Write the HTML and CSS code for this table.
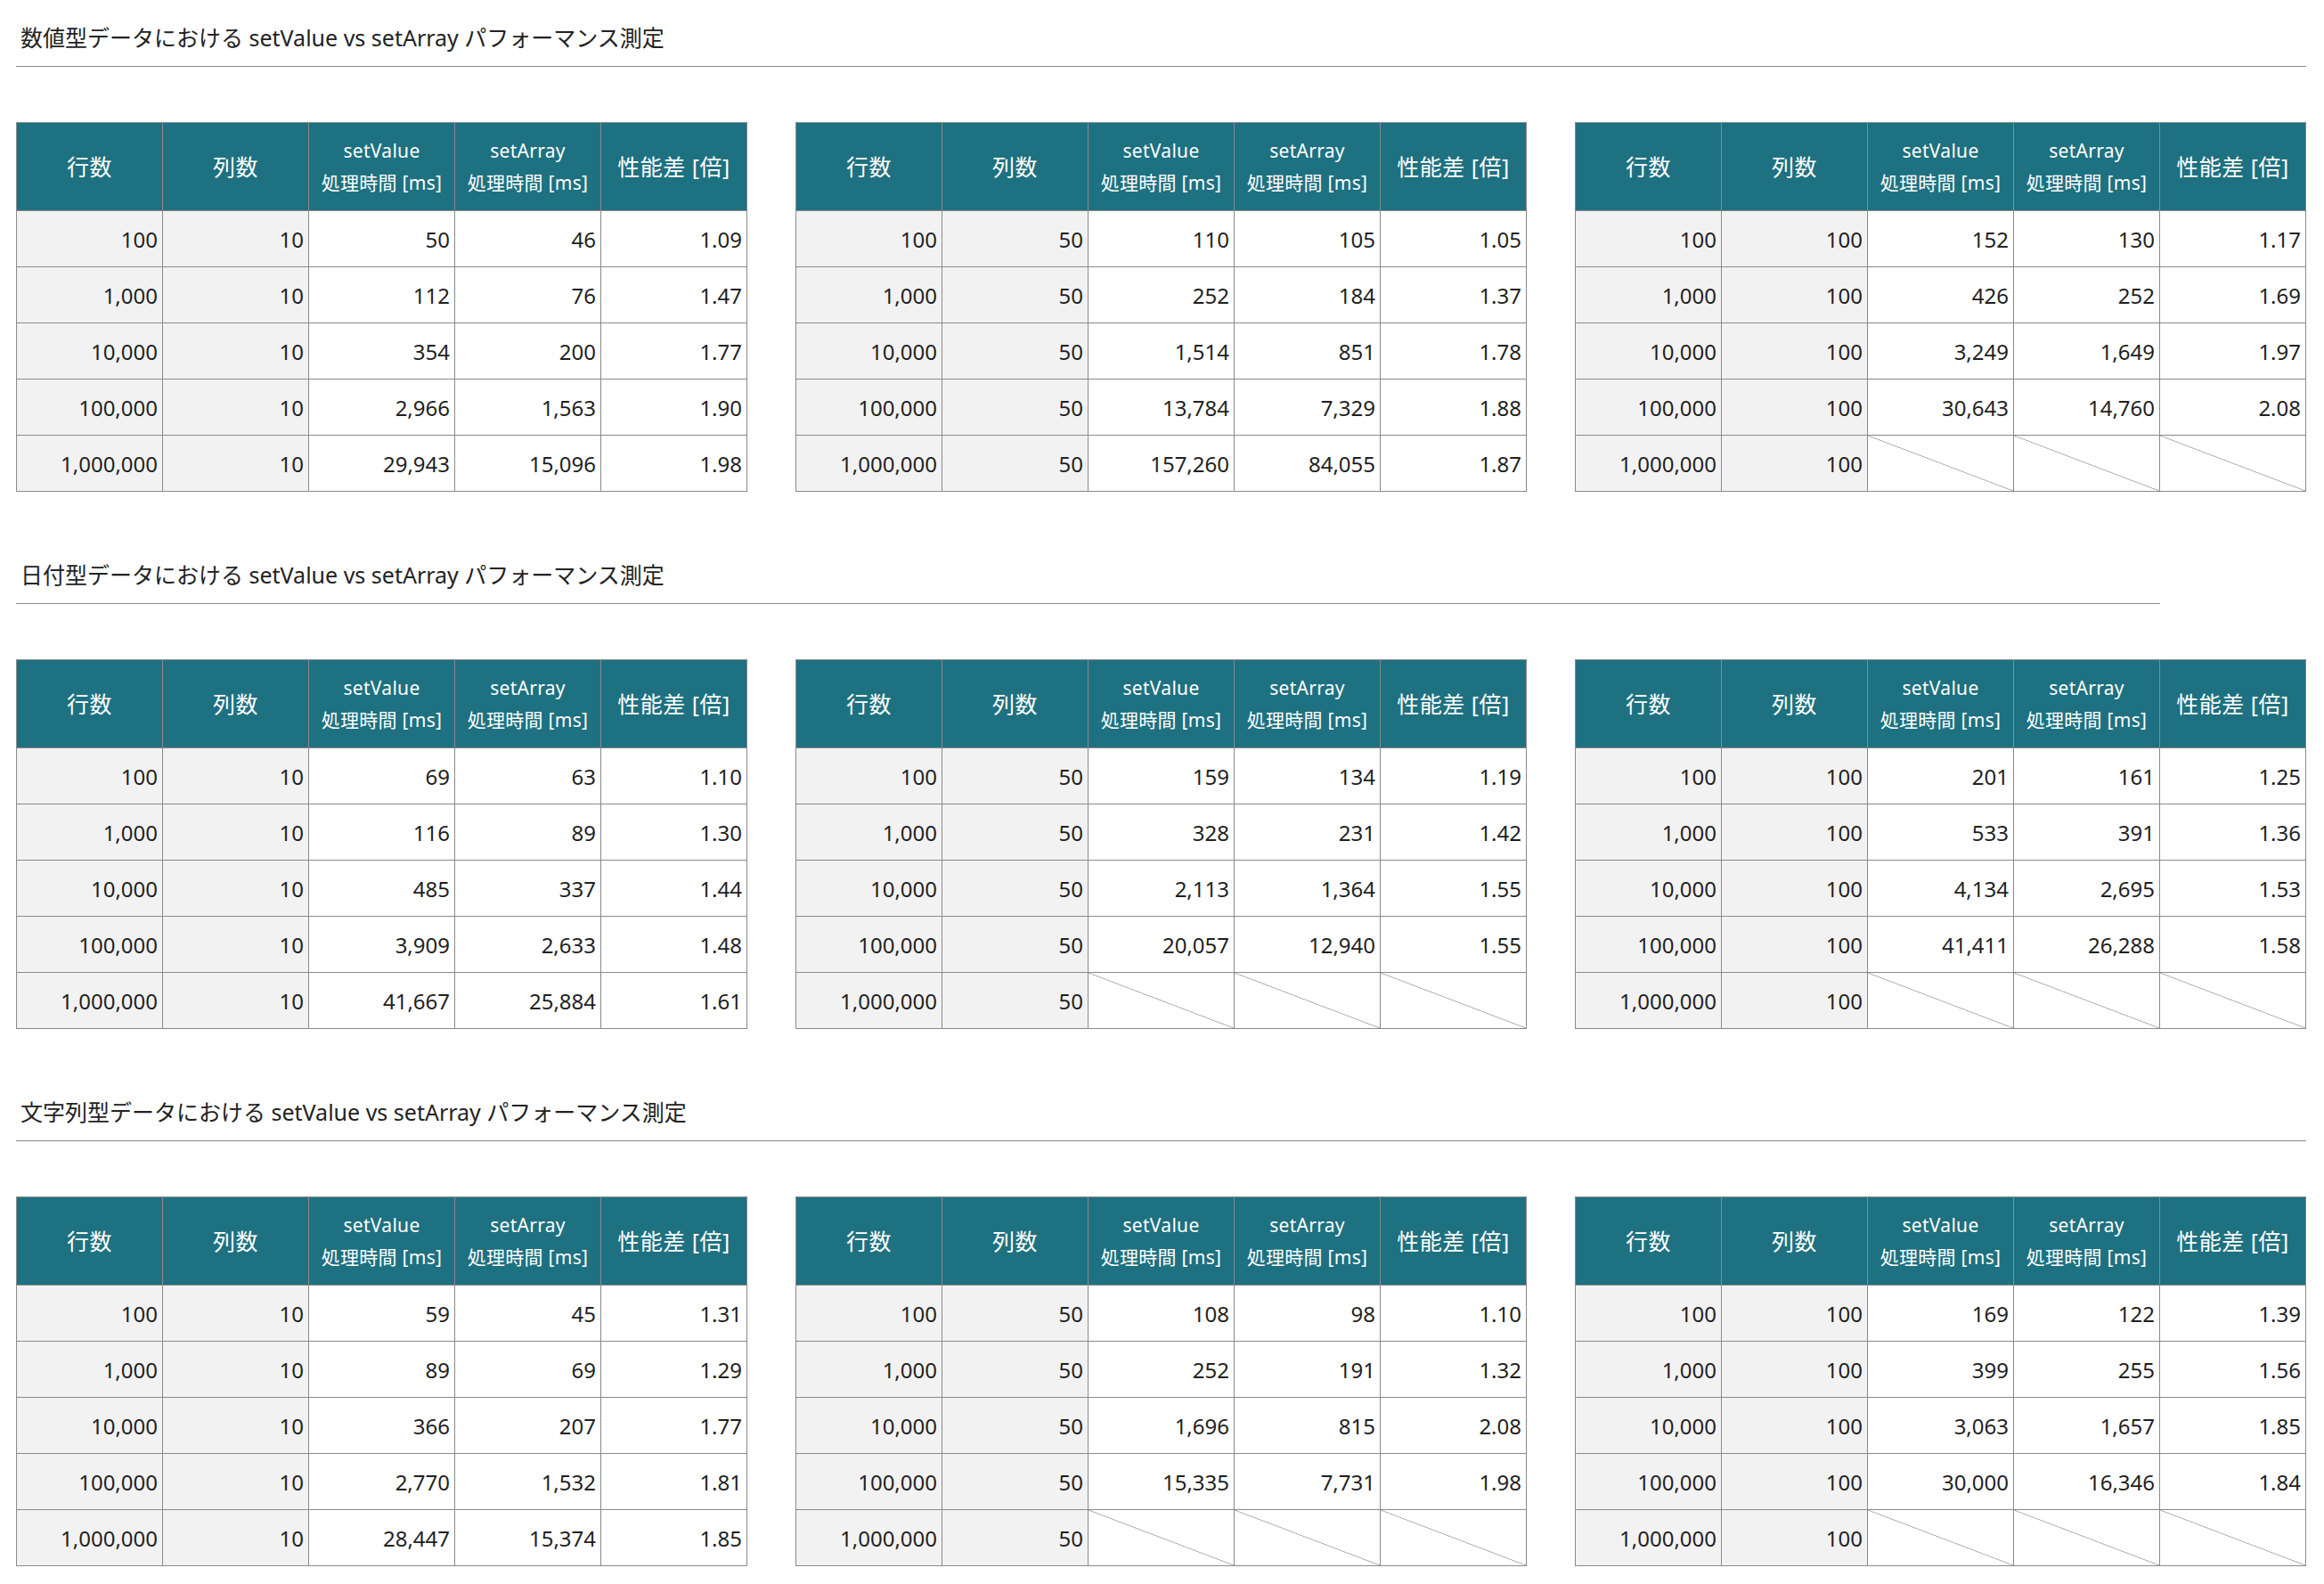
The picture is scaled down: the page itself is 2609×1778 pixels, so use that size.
FILE: index.html
```html
<!DOCTYPE html>
<html lang="ja">
<head>
<meta charset="utf-8">
<title>setValue vs setArray パフォーマンス測定</title>
<link rel="stylesheet" href="styles.css">
</head>
<body>
<div class="page">

<section class="section">
  <h2 class="title">数値型データにおける setValue vs setArray パフォーマンス測定</h2>
  <div class="tables">
    <div class="grid">
      <div class="h">行数</div><div class="h">列数</div><div class="h two">setValue<br>処理時間 [ms]</div><div class="h two">setArray<br>処理時間 [ms]</div><div class="h">性能差 [倍]</div>
      <div class="k">100</div><div class="k">10</div><div class="v">50</div><div class="v">46</div><div class="v">1.09</div>
      <div class="k">1,000</div><div class="k">10</div><div class="v">112</div><div class="v">76</div><div class="v">1.47</div>
      <div class="k">10,000</div><div class="k">10</div><div class="v">354</div><div class="v">200</div><div class="v">1.77</div>
      <div class="k">100,000</div><div class="k">10</div><div class="v">2,966</div><div class="v">1,563</div><div class="v">1.90</div>
      <div class="k">1,000,000</div><div class="k">10</div><div class="v">29,943</div><div class="v">15,096</div><div class="v">1.98</div>
    </div>
    <div class="grid">
      <div class="h">行数</div><div class="h">列数</div><div class="h two">setValue<br>処理時間 [ms]</div><div class="h two">setArray<br>処理時間 [ms]</div><div class="h">性能差 [倍]</div>
      <div class="k">100</div><div class="k">50</div><div class="v">110</div><div class="v">105</div><div class="v">1.05</div>
      <div class="k">1,000</div><div class="k">50</div><div class="v">252</div><div class="v">184</div><div class="v">1.37</div>
      <div class="k">10,000</div><div class="k">50</div><div class="v">1,514</div><div class="v">851</div><div class="v">1.78</div>
      <div class="k">100,000</div><div class="k">50</div><div class="v">13,784</div><div class="v">7,329</div><div class="v">1.88</div>
      <div class="k">1,000,000</div><div class="k">50</div><div class="v">157,260</div><div class="v">84,055</div><div class="v">1.87</div>
    </div>
    <div class="grid">
      <div class="h">行数</div><div class="h">列数</div><div class="h two">setValue<br>処理時間 [ms]</div><div class="h two">setArray<br>処理時間 [ms]</div><div class="h">性能差 [倍]</div>
      <div class="k">100</div><div class="k">100</div><div class="v">152</div><div class="v">130</div><div class="v">1.17</div>
      <div class="k">1,000</div><div class="k">100</div><div class="v">426</div><div class="v">252</div><div class="v">1.69</div>
      <div class="k">10,000</div><div class="k">100</div><div class="v">3,249</div><div class="v">1,649</div><div class="v">1.97</div>
      <div class="k">100,000</div><div class="k">100</div><div class="v">30,643</div><div class="v">14,760</div><div class="v">2.08</div>
      <div class="k">1,000,000</div><div class="k">100</div><div class="v na"></div><div class="v na"></div><div class="v na"></div>
    </div>
  </div>
</section>

<section class="section">
  <h2 class="title short">日付型データにおける setValue vs setArray パフォーマンス測定</h2>
  <div class="tables">
    <div class="grid">
      <div class="h">行数</div><div class="h">列数</div><div class="h two">setValue<br>処理時間 [ms]</div><div class="h two">setArray<br>処理時間 [ms]</div><div class="h">性能差 [倍]</div>
      <div class="k">100</div><div class="k">10</div><div class="v">69</div><div class="v">63</div><div class="v">1.10</div>
      <div class="k">1,000</div><div class="k">10</div><div class="v">116</div><div class="v">89</div><div class="v">1.30</div>
      <div class="k">10,000</div><div class="k">10</div><div class="v">485</div><div class="v">337</div><div class="v">1.44</div>
      <div class="k">100,000</div><div class="k">10</div><div class="v">3,909</div><div class="v">2,633</div><div class="v">1.48</div>
      <div class="k">1,000,000</div><div class="k">10</div><div class="v">41,667</div><div class="v">25,884</div><div class="v">1.61</div>
    </div>
    <div class="grid">
      <div class="h">行数</div><div class="h">列数</div><div class="h two">setValue<br>処理時間 [ms]</div><div class="h two">setArray<br>処理時間 [ms]</div><div class="h">性能差 [倍]</div>
      <div class="k">100</div><div class="k">50</div><div class="v">159</div><div class="v">134</div><div class="v">1.19</div>
      <div class="k">1,000</div><div class="k">50</div><div class="v">328</div><div class="v">231</div><div class="v">1.42</div>
      <div class="k">10,000</div><div class="k">50</div><div class="v">2,113</div><div class="v">1,364</div><div class="v">1.55</div>
      <div class="k">100,000</div><div class="k">50</div><div class="v">20,057</div><div class="v">12,940</div><div class="v">1.55</div>
      <div class="k">1,000,000</div><div class="k">50</div><div class="v na"></div><div class="v na"></div><div class="v na"></div>
    </div>
    <div class="grid">
      <div class="h">行数</div><div class="h">列数</div><div class="h two">setValue<br>処理時間 [ms]</div><div class="h two">setArray<br>処理時間 [ms]</div><div class="h">性能差 [倍]</div>
      <div class="k">100</div><div class="k">100</div><div class="v">201</div><div class="v">161</div><div class="v">1.25</div>
      <div class="k">1,000</div><div class="k">100</div><div class="v">533</div><div class="v">391</div><div class="v">1.36</div>
      <div class="k">10,000</div><div class="k">100</div><div class="v">4,134</div><div class="v">2,695</div><div class="v">1.53</div>
      <div class="k">100,000</div><div class="k">100</div><div class="v">41,411</div><div class="v">26,288</div><div class="v">1.58</div>
      <div class="k">1,000,000</div><div class="k">100</div><div class="v na"></div><div class="v na"></div><div class="v na"></div>
    </div>
  </div>
</section>

<section class="section">
  <h2 class="title">文字列型データにおける setValue vs setArray パフォーマンス測定</h2>
  <div class="tables">
    <div class="grid">
      <div class="h">行数</div><div class="h">列数</div><div class="h two">setValue<br>処理時間 [ms]</div><div class="h two">setArray<br>処理時間 [ms]</div><div class="h">性能差 [倍]</div>
      <div class="k">100</div><div class="k">10</div><div class="v">59</div><div class="v">45</div><div class="v">1.31</div>
      <div class="k">1,000</div><div class="k">10</div><div class="v">89</div><div class="v">69</div><div class="v">1.29</div>
      <div class="k">10,000</div><div class="k">10</div><div class="v">366</div><div class="v">207</div><div class="v">1.77</div>
      <div class="k">100,000</div><div class="k">10</div><div class="v">2,770</div><div class="v">1,532</div><div class="v">1.81</div>
      <div class="k">1,000,000</div><div class="k">10</div><div class="v">28,447</div><div class="v">15,374</div><div class="v">1.85</div>
    </div>
    <div class="grid">
      <div class="h">行数</div><div class="h">列数</div><div class="h two">setValue<br>処理時間 [ms]</div><div class="h two">setArray<br>処理時間 [ms]</div><div class="h">性能差 [倍]</div>
      <div class="k">100</div><div class="k">50</div><div class="v">108</div><div class="v">98</div><div class="v">1.10</div>
      <div class="k">1,000</div><div class="k">50</div><div class="v">252</div><div class="v">191</div><div class="v">1.32</div>
      <div class="k">10,000</div><div class="k">50</div><div class="v">1,696</div><div class="v">815</div><div class="v">2.08</div>
      <div class="k">100,000</div><div class="k">50</div><div class="v">15,335</div><div class="v">7,731</div><div class="v">1.98</div>
      <div class="k">1,000,000</div><div class="k">50</div><div class="v na"></div><div class="v na"></div><div class="v na"></div>
    </div>
    <div class="grid">
      <div class="h">行数</div><div class="h">列数</div><div class="h two">setValue<br>処理時間 [ms]</div><div class="h two">setArray<br>処理時間 [ms]</div><div class="h">性能差 [倍]</div>
      <div class="k">100</div><div class="k">100</div><div class="v">169</div><div class="v">122</div><div class="v">1.39</div>
      <div class="k">1,000</div><div class="k">100</div><div class="v">399</div><div class="v">255</div><div class="v">1.56</div>
      <div class="k">10,000</div><div class="k">100</div><div class="v">3,063</div><div class="v">1,657</div><div class="v">1.85</div>
      <div class="k">100,000</div><div class="k">100</div><div class="v">30,000</div><div class="v">16,346</div><div class="v">1.84</div>
      <div class="k">1,000,000</div><div class="k">100</div><div class="v na"></div><div class="v na"></div><div class="v na"></div>
    </div>
  </div>
</section>

</div>
</body>
</html>
```

FILE: styles.css
```css
html, body {
  margin: 0;
  padding: 0;
  background: #ffffff;
}

body {
  font-family: "Noto Sans", "Noto Sans CJK JP", sans-serif;
  color: #1f1f1f;
}

.page {
  padding: 26px 0 0 18px;
  display: flex;
  flex-direction: column;
  gap: 77px;
}

.section {
  width: 2571px;
}

.title {
  margin: 0 0 62px 0;
  padding: 0 0 16px 5px;
  font-size: 25px;
  line-height: 32px;
  font-weight: 400;
  color: #222222;
  border-bottom: 1px solid #8a8a8a;
}

.title.short {
  width: 2402px;
}

.tables {
  display: flex;
  gap: 54px;
}

.grid {
  display: grid;
  grid-template-columns: repeat(5, 163px);
  grid-template-rows: 98px repeat(5, 62px);
  gap: 1px;
  padding: 1px;
  background: #8a8a8a;
}

.h {
  background: #1e7180;
  color: #ffffff;
  font-size: 25px;
  letter-spacing: 0.5px;
  line-height: 32px;
  display: flex;
  align-items: center;
  justify-content: center;
  text-align: center;
}

.h.two {
  font-size: 21px;
  letter-spacing: 0.3px;
  line-height: 36px;
}

.k,
.v {
  font-size: 24px;
  display: flex;
  align-items: center;
  justify-content: flex-end;
  padding-right: 5px;
  color: #1f1f1f;
}

.k {
  background: #f2f2f2;
}

.v {
  background: #ffffff;
}

.v.na {
  background: linear-gradient(to top right,
    #ffffff calc(50% - 0.8px),
    #a0a0a0 50%,
    #ffffff calc(50% + 0.8px));
}
```
